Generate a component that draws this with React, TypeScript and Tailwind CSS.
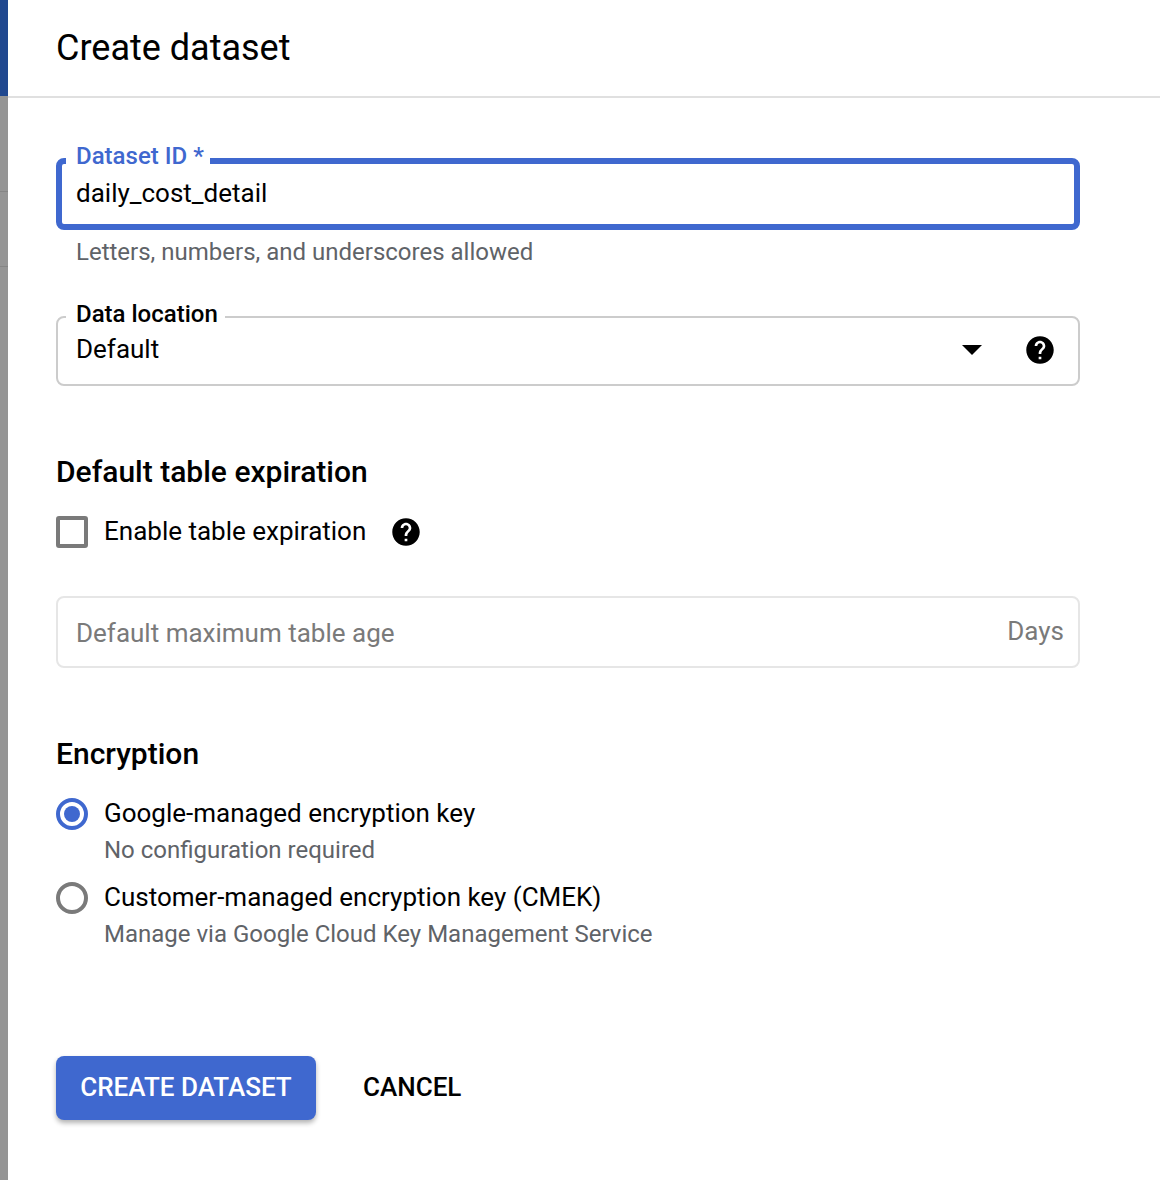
const FONT = "font-['Roboto',sans-serif]"

function HelpIcon() {
  return (
    <svg width="32" height="32" viewBox="0 0 24 24" fill="#000">
      <path d="M12 1.7C6.3 1.7 1.7 6.3 1.7 12S6.3 22.3 12 22.3 22.3 17.700 22.3 12 17.700 1.700 12 1.700zM13 19h-2v-2h2v2zm2.100-7.700-.9.900C13.400 13 13 13.600 13 15h-2v-.5c0-1.100.4-2.100 1.200-2.800l1.200-1.300c.4-.3.600-.8.600-1.400 0-1.100-.9-2-2-2s-2 .9-2 2H8c0-2.200 1.800-4 4-4s4 1.800 4 4c0 .9-.4 1.700-.9 2.300z" />
    </svg>
  )
}

function RadioRow({ checked, title, hint }: { checked?: boolean; title: string; hint: string }) {
  return (
    <div className="flex gap-4">
      <div
        className={`mt-[3px] flex h-8 w-8 shrink-0 items-center justify-center rounded-full border-4 ${
          checked ? 'border-[#3f68cf]' : 'border-[#7a7a7a]'
        }`}
      >
        {checked && <div className="h-4 w-4 rounded-full bg-[#3f68cf]" />}
      </div>
      <div>
        <div className="text-[26px] leading-[36px] text-black">{title}</div>
        <div className="mt-[1px] text-[24px] leading-[36px] text-[#5f6368]">{hint}</div>
      </div>
    </div>
  )
}

export default function App() {
  return (
    <div className={`flex h-[1180px] w-[1160px] overflow-hidden bg-white ${FONT}`}>
      {/* page behind the dialog */}
      <div className="flex w-2 shrink-0 flex-col bg-[#959595]">
        <div className="h-[96px] bg-[#20488f]" />
        <div className="h-[96px] border-b border-[#858585]" />
        <div className="h-[75px] border-b border-[#858585]" />
      </div>

      <div className="flex-1">
        <div className="flex h-[98px] items-center border-b-2 border-[#e0e0e0] pl-[48px]">
          <h1 className="pb-[1px] text-[36px] font-normal text-black">Create dataset</h1>
        </div>

        <div className="w-[1072px] pl-[48px]">
          <div className="relative mt-[60px] flex h-[72px] w-[1024px] items-center rounded-lg border-[6px] border-[#3f68cf] pb-[2px] pl-[14px]">
            <span className="absolute left-[4px] top-[-24px] bg-white pl-[10px] pr-[6px] text-[24px] font-medium leading-[32px] text-[#3f68cf]">
              Dataset ID *
            </span>
            <span className="text-[26px] text-black">daily_cost_detail</span>
          </div>
          <p className="mt-[4px] pl-[20px] text-[24px] leading-[36px] text-[#5f6368]">
            Letters, numbers, and underscores allowed
          </p>

          <div className="relative mt-[46px] flex h-[70px] w-[1024px] items-center rounded-lg border-2 border-[#cccccc] pb-[2px] pl-[18px] pr-[22px]">
            <span className="absolute left-[8px] top-[-20px] bg-white pl-[10px] pr-[7px] text-[24px] font-medium leading-[32px] text-black">
              Data location
            </span>
            <span className="mb-[2px] flex-1 text-[26px] text-black">Default</span>
            <div className="mr-[42px] h-0 w-0 border-x-[10px] border-t-[10px] border-x-transparent border-t-black" />
            <HelpIcon />
          </div>

          <h2 className="mt-[66px] text-[30px] font-medium leading-[40px] text-black">Default table expiration</h2>
          <div className="mt-[23px] flex items-center">
            <div className="h-8 w-8 rounded-[3px] border-4 border-[#7a7a7a]" />
            <span className="ml-4 pb-[2px] text-[26px] leading-[32px] text-black">Enable table expiration</span>
            <span className="ml-[24px]">
              <HelpIcon />
            </span>
          </div>

          <div className="mt-[47px] flex h-[72px] w-[1024px] items-center justify-between rounded-lg border-2 border-[#e6e6e6] pl-[18px] pr-[14px]">
            <span className="mt-[2px] text-[26px] text-[#7a7a7a]">Default maximum table age</span>
            <span className="mb-[2px] text-[26px] text-[#7a7a7a]">Days</span>
          </div>

          <h2 className="mt-[66px] text-[30px] font-medium leading-[40px] text-black">Encryption</h2>
          <div className="mt-[21px] flex flex-col gap-[11px]">
            <RadioRow checked title="Google-managed encryption key" hint="No configuration required" />
            <RadioRow title="Customer-managed encryption key (CMEK)" hint="Manage via Google Cloud Key Management Service" />
          </div>

          <div className="mt-[104px] flex items-center gap-[47px]">
            <button className="h-[64px] w-[260px] rounded-lg bg-[#3f68cf] pb-[2px] text-[26px] font-medium text-white shadow-[0_3px_5px_rgba(0,0,0,0.3)]">
              CREATE DATASET
            </button>
            <button className="pb-[2px] text-[26px] font-medium text-black">CANCEL</button>
          </div>
        </div>
      </div>
    </div>
  )
}
